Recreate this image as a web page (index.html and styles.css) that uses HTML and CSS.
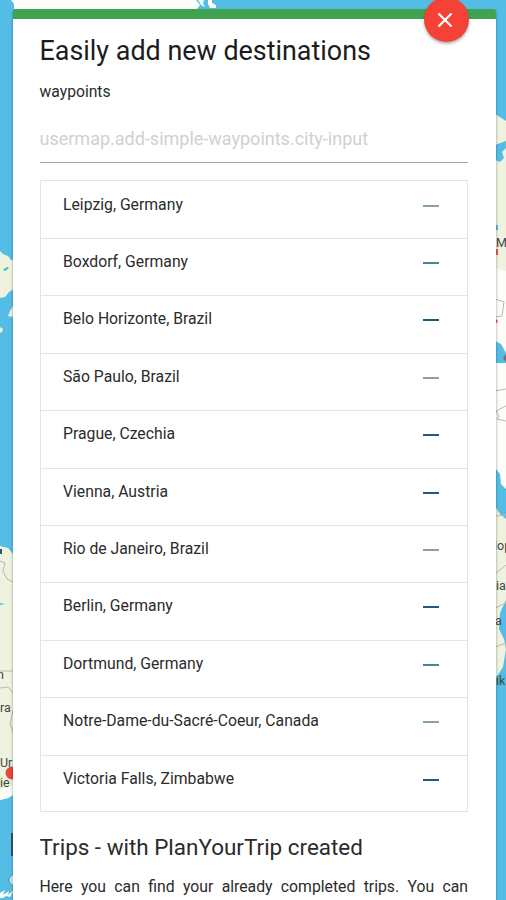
FILE: index.html
```html
<!DOCTYPE html>
<html lang="en">
<head>
    <meta charset="UTF-8">
    <title>PlanYourTrip</title>
    <link rel="stylesheet" href="styles.css">
</head>
<body>
<svg class="map" width="506" height="900" viewBox="0 0 506 900">
    <rect width="506" height="900" fill="#53bde6"/>
    <!-- west side -->
    <path class="ice" d="M11 0H196l4 5-3 4H14V4z"/>
    <path class="ice" d="M198 0h6l-1 3 2 4-4-2zM208 0h4v3l4 2v3h-6l-2-4z"/>
    <path class="land" d="M0 251l3 3 5 2 3 4h3v29l-5 3-4 5-5 1z"/>
    <path d="M3 270l4-3 2 1-4 3z" fill="#35b6cf"/>
    <path class="land" d="M13 306l-3 5-2 5 5 1zM0 327l3 2-1 3-2 1z"/>
    <path class="land" d="M0 546l8 2 5 6v241l-5 3-8 2z"/>
    <path class="ice" d="M0 789l13-3v9l-5 3-8 2z"/>
    <path d="M0 603l5 1-5 1z" fill="#53bde6"/>
    <path class="border" d="M0 561l5 2-2 8 4 8 6 3M0 671h13M0 688l8-1 5 6M13 710l-3 14 3 8"/>
    <circle cx="12" cy="773" r="6.500" fill="#ef4534"/>
    <path d="M0 549h2v5H0zM11 833h2v23h-2z" fill="#315767"/>
    <circle cx="15" cy="880" r="6" fill="#d5e3eb" stroke="#398db7"/>
    <path class="ice" d="M0 893l5-3-2 5 6-4-1 4 6-5-4 7-4-1-3 2H0z"/>
    <text x="-3" y="679">n</text>
    <text x="0" y="712">ra</text>
    <text x="0" y="767">Ur</text>
    <text x="0" y="787">ie</text>
    <!-- east side -->
    <path class="land" d="M495 114l11 7v242l-11-22z"/>
    <path class="ice" d="M495 268l11 3v91l-11-21z"/>
    <path d="M495 145l11-4v7l-4 4 2 6-4 4-5-2zM495 225h3v5h-3z" fill="#53bde6"/>
    <path class="ice" d="M495 363h11v149l-8-16-3-27z"/>
    <path d="M495 468l5 6 1 10 5 5v25l-7-6-4-9z" fill="#53bde6"/>
    <path class="land" d="M495 506l5 8 6 5v81l-6 13-1 16 5 10 2 10-3 18-8 12z"/>
    <path d="M495 341l6 3 5 9v10h-11z" fill="#53bde6"/>
    <path class="border" d="M495 299l9 3-2 14-7 1M495 391l11-2M506 406l-10 5 3 5-2 3 9 2M495 516l11-1M495 574l11-9M495 608l11-5M495 647l11-4"/>
    <path d="M495 249h3v6h-3zM495 318l3 3-3 4z" fill="#ef5549"/>
    <path d="M506 354l-3 4 3 4z" fill="#8a6670"/>
    <text x="496" y="247">M</text>
    <text x="494" y="550">iop</text>
    <text x="496" y="590">ia</text>
    <text x="495" y="625">a</text>
    <text x="496" y="685">ik</text>
</svg>

<div class="card">
    <button class="close">
        <svg width="24" height="24" viewBox="0 0 24 24"><path d="M5.500 5.500l13 13M18.500 5.500l-13 13" stroke="#fff" stroke-width="2.200"/></svg>
    </button>
    <h1>Easily add new destinations</h1>
    <p class="label">waypoints</p>
    <input class="city" type="text" placeholder="usermap.add-simple-waypoints.city-input">
    <ul class="waypoints">
        <li><span>Leipzig, Germany</span><i class="minus pale"></i></li>
        <li><span>Boxdorf, Germany</span><i class="minus mid"></i></li>
        <li><span>Belo Horizonte, Brazil</span><i class="minus"></i></li>
        <li><span>São Paulo, Brazil</span><i class="minus pale"></i></li>
        <li><span>Prague, Czechia</span><i class="minus"></i></li>
        <li><span>Vienna, Austria</span><i class="minus"></i></li>
        <li><span>Rio de Janeiro, Brazil</span><i class="minus pale"></i></li>
        <li><span>Berlin, Germany</span><i class="minus"></i></li>
        <li><span>Dortmund, Germany</span><i class="minus mid"></i></li>
        <li><span>Notre-Dame-du-Sacré-Coeur, Canada</span><i class="minus pale"></i></li>
        <li><span>Victoria Falls, Zimbabwe</span><i class="minus"></i></li>
    </ul>
    <h2>Trips - with PlanYourTrip created</h2>
    <p class="intro">Here you can find your already completed trips. You can</p>
</div>
</body>
</html>
```

FILE: styles.css
```css
body{
    margin: 0;
    height: 900px;
    overflow: hidden;
    font-family: Roboto, sans-serif;
    color: #2b2b2b;
}
.map{
    position: absolute;
    top: 0;
    left: 0;
}
.map text{
    font-size: 12.500px;
    fill: #454545;
}
.land{
    fill: #edf3df;
}
.ice{
    fill: #fcfdf8;
}
.border{
    fill: none;
    stroke: #bbb8af;
}
.card{
    position: relative;
    box-sizing: border-box;
    width: 483px;
    height: 900px;
    margin: 9px 0 0 13px;
    padding: 16px 28px 0 26.500px;
    border-top: 10.500px solid #3fa352;
    border-radius: 2px 2px 0 0;
    background-color: #fff;
    box-shadow: 0 2px 3px rgba(0,0,0,.4);
}
.close{
    position: absolute;
    top: -22px;
    right: 27.500px;
    display: flex;
    align-items: center;
    justify-content: center;
    width: 45px;
    height: 45px;
    padding: 0 2px 0 0;
    box-sizing: border-box;
    border: 0;
    border-radius: 50%;
    background-color: #f44336;
    box-shadow: 0 2px 3px rgba(0,0,0,.3);
}
h1{
    margin: 0;
    font-size: 26.900px;
    line-height: 32px;
    font-weight: 400;
    color: #1c1c1c;
    white-space: nowrap;
}
.label{
    margin: 13.700px 0 0;
    font-size: 15.700px;
    line-height: 22px;
}
.city{
    display: block;
    box-sizing: border-box;
    width: 100%;
    height: 47px;
    margin: 13px 0 17px;
    padding: 0;
    border: 0;
    border-bottom: 1px solid #a8a8a8;
    background: none;
    font-family: inherit;
    font-size: 18px;
}
.city::placeholder{
    color: #d0d0d0;
}
.waypoints{
    display: grid;
    grid-template-rows: repeat(10, 57.400px) 1fr;
    box-sizing: border-box;
    height: 632px;
    margin: 0;
    padding: 0;
    border: 1px solid #e4e4e4;
    list-style: none;
}
.waypoints li{
    display: flex;
    justify-content: space-between;
    box-sizing: border-box;
    padding: 12px 28.500px 0 22.500px;
    font-size: 15.750px;
    line-height: 22px;
}
.waypoints li + li{
    border-top: 1px solid #e4e4e4;
}
.waypoints li:first-child{
    padding-top: 13px;
}
.minus{
    width: 16px;
    height: 2px;
    margin-top: 11px;
    background-color: #1f5c74;
}
.minus.mid{
    background-color: #53818f;
}
.minus.pale{
    background-color: #8aa0a8;
}
h2{
    margin: 20px 0 0;
    font-size: 22.450px;
    line-height: 30px;
    font-weight: 400;
    white-space: nowrap;
}
.intro{
    margin: 14px 0 0;
    font-size: 15.750px;
    line-height: 22px;
    text-align: justify;
    text-align-last: justify;
    white-space: nowrap;
}
```
